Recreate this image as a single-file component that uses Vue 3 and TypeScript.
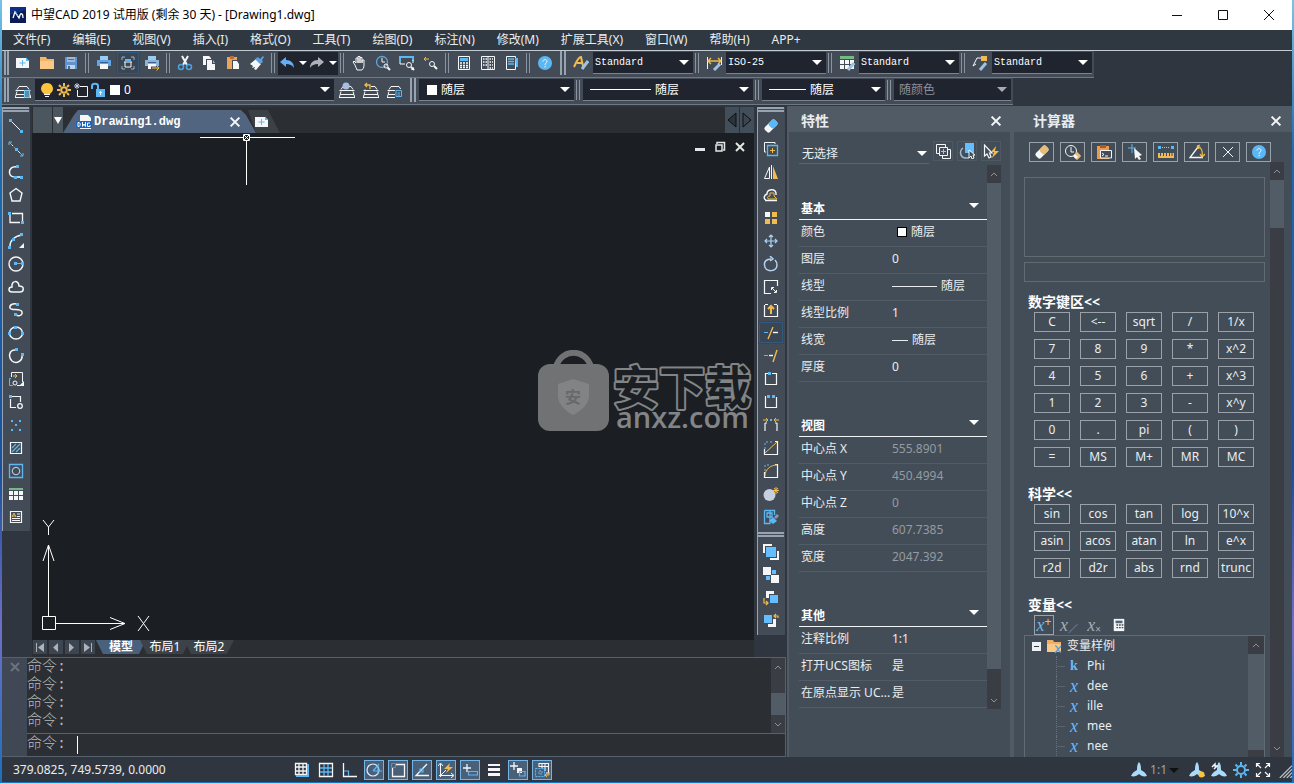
<script setup lang="ts">
import { ref } from 'vue'

const W = '#f4f6f8'
const B = '#5cb8f4'
const Y = '#f0bb50'
const G = '#b9c0c8'

const s = (color: string, d: string, width = 1): string =>
  `<path d="${d}" fill="none" stroke="${color}" stroke-width="${width}"/>`
const f = (color: string, d: string): string => `<path d="${d}" fill="${color}"/>`
const c = (color: string, x: number, y: number, r: number, width = 1): string =>
  `<circle cx="${x}" cy="${y}" r="${r}" fill="none" stroke="${color}" stroke-width="${width}"/>`
const dot = (color: string, x: number, y: number): string =>
  `<rect x="${x}" y="${y}" width="3" height="3" fill="${color}"/>`
const printer = (color: string): string =>
  f('#9bc9f2', 'M4 1H12V5H4z') + f(color, 'M1 5H15V11H1z') + f(W, 'M4 9H12V14H4z') + s('#3a5f8c', 'M4 7.500H12')
const stack = s(W, 'M2 7.500L4 4.500H12L14 7.500M1 8.500H15M1 8V9M15 8V9M2 9.500L1 12.500H15L14 9.500M1 13L0 15.500H16L15 13')
const propeller = f('#a9dcfb', 'M8 0C10 2 10 6 10 8C12 9 15 11 16 14C13 15 10 14 8 12C6 14 3 15 0 14C1 11 4 9 6 8C6 6 6 2 8 0z')
const tableGrid = f(W, 'M1 5H5V9H1zM6 5H10V9H6zM11 5H15V9H11zM1 10H5V14H1zM6 10H10V14H6zM11 10H15V14H11z')
const eraser = (color: string): string =>
  `<g transform="rotate(-45 8 8)"><rect x="1" y="4.500" width="14" height="7" rx="2" fill="${W}"/><rect x="7" y="4.500" width="8" height="7" rx="2" fill="${color}"/></g>`
const question =
  `<circle cx="8" cy="8" r="7" fill="${B}"/>` + s(W, 'M6 6.500C6 4 10 4 10 6.500C10 8 8 8 8 10', 1) + f(W, 'M7.500 11h1.200v1.200h-1.200z')

const icons: Record<string, string> = {
  newFile: f(W, 'M1 3H11L14 6V13H1z') + f(B, 'M11 2.500L14.500 6H11z') + s(B, 'M7.500 5V11M4.500 8H10.500'),
  open: f('#f3b56a', 'M1 2H7L8 4H15V14H1z') + f('#fac887', 'M1 6H15V14H1z'),
  save: f('#5e93cf', 'M2 2H14V14H2z') + f('#9fb9d4', 'M4 2H12V7H4z') + f('#c3d2e2', 'M4 10H12V14H4z') + f('#3f6798', 'M5 11H7V14H5z') + s('#4d6f96', 'M5 4.500H11'),
  print: printer('#5fa6e6'),
  preview: s('#9fb4c8', 'M2 5V2H5M11 2H14V5M14 11V14H11M5 14H2V11') + f(B, 'M5 4H11V6H5z') + s(W, 'M4 7H12M5 7V12H11V7'),
  plot: printer('#8db3d6') + s('#434c56', 'M7 13H16', 3) + s(Y, 'M8 13H15M12.500 10.500L15 13L12.500 15.500', 1),
  cut: s(W, 'M5 1L10 10M11 1L6 10', 2) + c('#4ba2e0', 4, 12, 2.5, 1.5) + c('#4ba2e0', 12, 12, 2.5, 1.5),
  copy: f(W, 'M2 1H8L10 3V10H2z') + f('#434c56', 'M5 4H11L15 8V16H5z') + f(W, 'M6 5H11V9H14V15H6z') + f('#9db5ca', 'M12 5L14 8H12z'),
  paste: f('#eba55a', 'M2 2H12V14H2z') + f('#b96f33', 'M5 1H9V4H5z') + f('#434c56', 'M7 5H12L15 8V15H7z') + f(W, 'M8 6H12L14 9V14H8z'),
  match: f(W, 'M1 9L7 4L12 9L7 15L5 14L6 12L3 13L4 11z') + f('#5f9ee0', 'M6 4L9 2L11 4L14 1L15 2L13 5L14 7L11 9z'),
  undo: f('#65adf5', 'M1 7L7 2V5C12 5 15 8 15 13C13 10 11 9 7 9V12z'),
  redo: f('#aeb2b8', 'M15 7L9 2V5C4 5 1 8 1 13C3 10 5 9 9 9V12z'),
  pan: s(W, 'M4 10L2 7L3 6L5 8V3H7V8V1.500H9V8V2.500H11V8V5H13V10C13 13 12 14 11 15H6C5 13 5 12 4 10', 1),
  zoom: c('#5da7dc', 7, 7, 5.5, 1.3) + s(W, 'M7 3V7H10') + c(W, 11, 11, 2, 1) + s(W, 'M12.500 12.500L15 15', 2),
  zoomWindow: s(B, 'M1 6V2H14V6', 2) + s(W, 'M1 6V9H6M14 5V8') + c(W, 10, 10, 2.5) + s(W, 'M12 12L15 15', 2) + f(W, 'M15 12V15H12z'),
  zoomPrevious: s(Y, 'M1 4H6M3 2L1 4L3 6') + c(W, 9, 9, 2.5) + s(W, 'M11 11L14 14', 2),
  calc: s(W, 'M2.500 1.500H13.500V14.500H2.500z') + f(B, 'M4 3H12V6H4z') + `<path d="M4 8H12M4 10.500H12M4 12.500H12" stroke="${W}" stroke-width="1.400" stroke-dasharray="2 1"/>`,
  palette: s(W, 'M1.500 1.500H14.500V14.500H1.500zM8 1V15') + `<path d="M3 4H7M3 7H7M3 10H7M9.500 4H13M9.500 7H13M9.500 10H13M9.500 13H13" stroke="${W}" stroke-width="1.500" stroke-dasharray="1.500 1"/>`,
  sheet: s(W, 'M2.500 1.500H11.500V14.500H2.500z') + s(B, 'M4 4H10M4 6.500H10M4 9H10', 1.4) + f(B, 'M11 3H14V12H12z'),
  help: question,
  textStyle: s(Y, 'M1 12C3 8 5 2 8 2L10 11M4 8H10', 2) + s('#9fc3e5', 'M15 6L9 14', 3),
  dimStyle: s(W, 'M1.500 2V14M15.500 2V10') + s(Y, 'M2 6H15M5 3L2 6L5 9M12 3L15 6L12 9', 1.4) + s('#9fc3e5', 'M14 9L8 15', 3),
  tableStyle: f('#75b984', 'M1 1H15V4H1z') + tableGrid + s('#9fc3e5', 'M15 8L9 15', 3),
  leaderStyle: s(W, 'M1 11L5 3H10M1 11L4 9') + f(Y, 'M9 1H15V6H9z') + s('#9fc3e5', 'M14 8L8 15', 3),
  layers: stack + f('#79c8fa', 'M9 8H15V16H9z') + s('#355', 'M10 10H14M10 12H14M10 14H14'),
  layerMake: stack + '<circle cx="7" cy="4" r="3.500" fill="#a8bcdf"/>',
  layerPrev: stack + f('#434c56', 'M0 0H8V7H0z') + s(Y, 'M7 7V3H2M4 1L2 3L4 5', 1.3),
  layerState: stack + f('#434c56', 'M8 7H16V16H8z') + s(B, 'M9 8.500H14.500V14.500H9zM10.500 11H13M10.500 13H13'),
  bulb: f('#fcc43c', 'M8 1C12 1 14 4 14 7C14 9 12 11 11 12H5C4 11 2 9 2 7C2 4 4 1 8 1z') + f(W, 'M5 12H11V13H5zM6 14H10V15H6z'),
  sun: c(Y, 8, 8, 2.8, 2) + s(Y, 'M8 1V4M8 12V15M1 8H4M12 8H15M3 3L5 5M11 11L13 13M3 13L5 11M11 5L13 3', 2),
  freeze: s(W, 'M7 4.500H14.500V14.500H4.500V8') + s('#c8d0d8', 'M4 1V7M1 4H7M2 2L6 6M6 2L2 6'),
  lock: s(B, 'M2 7V4C2 1 8 1 8 4V8', 2) + f(B, 'M6 7H15V15H6z') + f(W, 'M10 9H11V13H10zM9 10H12V11H9z'),
  dwg: f(W, 'M4 1H12L15 4V15H4z') + f('#1767c0', 'M0 7H16V14H0z') + s('#fff', 'M2 8.500V12.500C5 13 5 8 2 8.500M6.500 8V12.500L8 10L9.500 12.500V8M14 9H11.500V12.500H14V11'),
  line: s(W, 'M3 3L13 13') + dot(B, 1, 1) + dot(B, 12, 12),
  ray: `<path d="M3 3L13 13" stroke="${W}" stroke-dasharray="3 2"/>` + dot(B, 7, 7) + s(B, 'M1 4V1H4M12 15H15V12M1 1L4 4M15 15L12 12', 1),
  polyline: s(W, 'M9 3C4 2 1 5 1.500 9C2 12 4 13 7 13H14', 1.5) + dot(B, 8, 1) + dot(B, 6, 12) + dot(B, 12, 12),
  polygon: s(W, 'M8 1.500L14 6L12 14H4L2 6z', 1.4),
  rect: s(W, 'M2 4V12.500H12M4 3.500H14.500V11', 1.3) + dot(B, 0, 2) + dot(B, 13, 11),
  arc: s(W, 'M2 13C2 8 6 3 14 2', 1.5) + dot(B, 12, 0) + dot(B, 4, 5) + dot(B, 0, 13) + f(W, 'M16 10V15H11z'),
  circle: c(W, 8, 8, 7, 1.4) + dot(B, 6, 6) + dot(B, 13, 6) + s(B, 'M9 7.500H13'),
  cloud: s(W, 'M4 13C0 13 0 8 4 8C3 1 11 1 11 7C17 7 16 13 12 13z', 1.5),
  spline: s(W, 'M9 2C5 1 1 3 2 6C3 9 13 6 14 10C15 14 9 15 7 12', 1.5) + dot(B, 8, 1) + dot(B, 6, 11),
  ellipse: `<ellipse cx="8" cy="8" rx="6.500" ry="6" fill="none" stroke="${W}" stroke-width="1.500"/>` + dot(B, 6, 1) + dot(B, 0, 7) + dot(B, 13, 7),
  ellipseArc: s(W, 'M7 2C1 2 0 9 4 13C9 17 15 12 14 7', 1.5) + dot(B, 7, 0) + dot(B, 13, 5),
  block: s(W, 'M3.500 6V1.500H14.500V11M9 14.500H12') + s(B, 'M3 7.500H1.500V14.500H5') + s(Y, 'M5 5H9M7 3L9 5L7 7') + c(W, 7, 12, 2) + f(W, 'M16 10V15H11z'),
  makeBlock: s(W, 'M4 2.500H12.500V8M2.500 5V13.500H8', 1.2) + dot(B, 1, 1) + c(W, 12, 12, 2.3, 1.3),
  points: f(B, 'M3 3h2v2h-2zM11 3h2v2h-2zM7 7h2v2h-2zM3 12h2v2h-2zM11 12h2v2h-2z'),
  hatch: s(W, 'M2.500 2.500H13.500V13.500H2.500z', 1.2) + s(B, 'M4 8L8 4M4 12L12 4M8 12L12 8', 1.2),
  region: s(B, 'M1.500 1.500H14.500V14.500H1.500z', 1.3) + c('#a9c6de', 8, 8, 3.7, 1.2),
  table: f('#75b984', 'M1 2H15V4H1z') + tableGrid,
  mtext: s(W, 'M2.500 2.500H13.500V13.500H2.500z', 1.2) + s(Y, 'M4 8L6 4L8 8M4.500 7H7.500') + s(W, 'M9 5H12M9 7.500H12M4 9.500H12M4 11.500H12'),
  erase: eraser(B),
  duplicate: s(W, 'M3 11H1.500V1.500H12V3') + s(B, 'M4.500 4.500H14.500V14.500H4.500z', 1.3) + s(Y, 'M9.500 7V12M7 9.500H12'),
  mirror: s(W, 'M6.500 3V14.500H1.500z') + f(Y, 'M10 2L15 15H10z') + s(W, 'M8.500 1V15'),
  offset: s(W, 'M3 13C0 12 1 8 4 7C4 2 12 1 13 6V8M2 13.500H14', 1.4) + s(Y, 'M5 11.500C4 10 5 9 7 9V6H11V9L14 12H5z'),
  array: f(W, 'M2 2H7V7H2z') + f(Y, 'M9 2H14V7H9zM2 9H7V14H2zM9 9H14V14H9z'),
  move: s('#a9d2f5', 'M8 2V14M2 8H14M6 4L8 2L10 4M6 12L8 14L10 12M4 6L2 8L4 10M12 6L14 8L12 10', 1.2),
  rotate: s('#b5d2f0', 'M8 3C3 3 1 6 1.500 9C2 17 14 16 14 9C14 7 13 5 12 4M7 0L10 3L7 5', 1.5),
  scale: s(W, 'M14.500 7V1.500H1.500V14.500H8', 1.2) + s(W, 'M8.500 11V8.500H11M9 9L13 13M13.500 11V13.500H11', 1),
  stretch: s(W, 'M1.500 3V14.500H14.500V3M2 2.500H5M11 2.500H14', 1.2) + s(Y, 'M8 12V5M5 7L8 4L11 7', 2),
  trim: s(B, 'M1 7.500H5', 1) + s(W, 'M10 7.500H15', 1.4) + s(Y, 'M5 14L10 2', 1.4),
  extend: s(B, 'M1 7.500H5', 1) + s(W, 'M6 7.500H10', 1.4) + s(Y, 'M10 14L14 2', 1.4),
  breakPoint: s(W, 'M6 2.500H2.500V13.500H13.500V2.500H9', 1.2) + dot(B, 5, 1),
  breakLine: s(W, 'M3 2.500H2.500V13.500H13.500V3', 1.2) + dot(B, 4, 1) + dot(B, 9, 1),
  join: s(W, 'M2 6V14M14 6V14M2 6H4M12 6H14', 1.2) + s(Y, 'M0 3H5M3 1L5 3L3 5M16 3H11M13 1L11 3L13 5') + s(B, 'M7 3H9', 2),
  chamfer: s(W, 'M1.500 9V14.500H14.500V1.500H12', 1.2) + s(Y, 'M2 13L14 2') + `<path d="M2 9V2H10" fill="none" stroke="${B}" stroke-dasharray="2 2"/>`,
  fillet: s(W, 'M1.500 9V14.500H14.500V1.500H12', 1.2) + s(Y, 'M2 13C2 7 7 2 14 2') + `<path d="M2 8V2H8" fill="none" stroke="${B}" stroke-dasharray="2 2"/>`,
  explode: '<circle cx="6.500" cy="9" r="6" fill="#c5cfdf"/>' + s(Y, 'M13 1V8M10 4.500H16M11 2L15 7M15 2L11 7'),
  purge: s(B, 'M1.500 1.500H11.500V6M1.500 1.500V14.500H7V1.500M4 4H9V8H4z', 1.3) + f(B, 'M6 12L10 8L14 12L10 15z') + f('#8998a8', 'M11 8L14 5L16 7L13 10z'),
  front: f(W, 'M0 0H9V2H2V9H0zM16 16H7V14H14V7H16z') + f('#63bdff', 'M3 3H13V13H3z'),
  back: f(W, 'M0 0H8V8H0zM8 8H16V16H8z') + f('#63bdff', 'M9 3H13V7H9zM3 9H7V13H3z'),
  above: f(W, 'M3 1H11V4H6V8H3z') + f('#63bdff', 'M7 5H15V13H7z') + s(Y, 'M1 8V13H5M3 11L5 13L3 15', 1.2),
  under: f('#63bdff', 'M1 2H9V10H1z') + f(W, 'M10 6H13V14H5V11H10z') + s(Y, 'M15 5V3H11M13 1L11 3L13 5', 1.2),
  pickAdd: s(W, 'M4 10.500H1.500V1.500H10.500V4M4.500 4.500H12.500V12.500H4.500zM13 6.500H15.500V15.500H7.500V13', 1) + s(Y, 'M8.500 6V11M6 8.500H11'),
  quickSelect: s('#a4b9cd', 'M4 5C0 8 1 14 6 15H10', 1.5) + f('#63bdff', 'M6 0H15V10H6z') + `<path d="M10 7V15L12 13L13 16L15 15L14 12H16z" fill="#434d58" stroke="${W}"/>`,
  filter: `<path d="M1.500 2V13L4 11L6 15L8 14L6.500 10H9z" fill="none" stroke="${W}" stroke-width="1.200"/>` + f(Y, 'M13 3L8 9H11L9 15L16 8H12z'),
  clear: eraser('#e8bd74'),
  history: c(W, 6, 7, 5.5) + s(W, 'M6 3V8H9') + '<rect x="9" y="9" width="6" height="6" rx="1" transform="rotate(45 12 12)" fill="#e8bd74"/>' + f(W, 'M8 12L11 15L13 13L10 10z'),
  pasteValue: f('#eb9a50', 'M1 2H13V15H1z') + f('#a35c2c', 'M4 1H10V4H4z') + f('#434d58', 'M4 6H16V14H4z') + s(W, 'M4.500 6.500H15.500V14H4.500zM6 9L8 10.500L6 12M9 12H12'),
  pick: s(B, 'M5 0V9M1 4H9') + f(W, 'M7 4L15 11L12 12L14 15L12 16L10 13L8 15z'),
  ruler: dot(B, 0, 2) + dot(B, 13, 2) + `<path d="M4 3.500H12" stroke="${Y}" stroke-dasharray="1 1"/>` + f(Y, 'M0 9H16V14H0z') + s('#434d58', 'M2.500 9V12M5.500 9V12M8.500 9V12M11.500 9V12M14 9V12'),
  angle: s(W, 'M9 3L1 13.500H14', 1.3) + s(Y, 'M8 2C12 3 14 7 13 12M8 2L11 1M8 2L10 5M11 10L13 13L16 10', 1.3),
  cross: s(W, 'M3 3L13 13M13 3L3 13'),
  close: s(W, 'M3 3L13 13M13 3L3 13', 2.4),
  calculator: f(W, 'M2 1H14V15H2z') + f('#566370', 'M4 3H12V6H4z') + s('#434d58', 'M5 8H7M8 8H10M11 8H13M5 11H7M8 11H10M11 11H13', 1.6),
  grid: s(W, 'M1.500 1.500H12.500V12.500H1.500zM5 1V13M9 1V13M1 5H13M1 9H13', 1.3) + s(B, 'M14 2V14H2', 2),
  snap: s(W, 'M1.500 1.500H14.500V14.500H1.500z', 1.3) + s(B, 'M6 2V14M10 2V14M2 6H14M2 10H14', 1.3),
  ortho: s(W, 'M1.500 1V14.500H15', 1.3) + s(B, 'M2 9H6.500V14', 1.2),
  polar: c('#e0eefc', 7, 8, 6, 1.2) + s(B, 'M7 9H16M7 9L13 2M12 5V12', 1.2),
  osnap: s(W, 'M6 2.500H14.500V14.500H2.500V6', 1.3) + s('#e15b69', 'M1.500 1.500H5.500V5.500H1.500z'),
  track: s(W, 'M13 2L2 13.500H15', 1.3) + s(B, 'M6 7H9V10H6z', 1.2),
  ucs: s(W, 'M2.500 2V15M1 13.500H15M0 4L2.500 1L5 4M13 11L16 13.500L13 16M3 13L8 8') + f(Y, 'M12 1L6 7H10L8 11L15 5H11z'),
  dynInput: s(W, 'M5 2V10M1 6H9', 1.3) + s(B, 'M6.500 9.500H15.500V13H6.500z', 1.2),
  lineWeight: f(W, 'M2 2H14V4H2zM2 6H14V9H2zM2 11H14V14H2z'),
  cycle: s(W, 'M4 0V8M0 4H8', 1.3) + f(W, 'M7 6H12V11H7z') + s(B, 'M9.500 9.500H15V14H9.500z', 1.2),
  annotation: s(W, 'M5 5V1.500H14.500V11H12M8 2V6M11 2V9M5 4.500H14', 1.1) + `<path d="M1.500 6.500H10.500V14.500H1.500zM5 9H8V12H5z" fill="none" stroke="${B}" stroke-dasharray="2 1"/>` + s(Y, 'M15 10V13H11M13 11L11 13L13 15'),
  scaleIcon: propeller,
  scaleBulb: propeller + '<circle cx="12.500" cy="12.500" r="3" fill="#fcc43c"/>',
  scaleAuto: propeller + s(W, 'M1 5L4 2V4H7M3 7L6 4', 1.5),
  gear: c(B, 8, 8, 4, 2) + s(B, 'M8 0V3M8 13V16M0 8H3M13 8H16M2.500 2.500L4.500 4.500M11.500 11.500L13.500 13.500M2.500 13.500L4.500 11.500M11.500 4.500L13.500 2.500', 2),
  fullscreen: s(W, 'M1.500 5V1.500H5M11 1.500H14.500V5M14.500 11V14.500H11M5 14.500H1.500V11M2 2L6 6M14 2L10 6M14 14L10 10M2 14L6 10', 1.2),
  resize: s(G, 'M2 16L16 2M6 16L16 6M10 16L16 10M14 16L16 14', 1.4),
  appLogo: f('#0f2f85', 'M0 0H16V16H0z') + f('#0a1c56', 'M0 8L16 3V16H0z') + s('#fff', 'M3 11L5 5L9 11L10 8C11 6 13 6 13 11', 1.3) + s('#4cc3ff', 'M5 4L8 9'),
  folder: f('#eeb068', 'M1 2H7L8 4H15V14H1z') + f('#fac887', 'M1 6H15V14H1z') + s('#5b9bd0', 'M9 8C12 7 12 15 15 14M15 8L9 15', 1.3),
}

const menus = ['文件(F)', '编辑(E)', '视图(V)', '插入(I)', '格式(O)', '工具(T)', '绘图(D)', '标注(N)', '修改(M)', '扩展工具(X)', '窗口(W)', '帮助(H)', 'APP+']
const fileGroups = [
  ['newFile', 'open', 'save'],
  ['print', 'preview', 'plot'],
  ['cut', 'copy', 'paste', 'match'],
]
const viewGroups = [
  ['pan', 'zoom', 'zoomWindow', 'zoomPrevious'],
  ['calc', 'palette', 'sheet'],
]
const styleCombos = [
  { icon: 'textStyle', value: 'Standard' },
  { icon: 'dimStyle', value: 'ISO-25' },
  { icon: 'tableStyle', value: 'Standard' },
  { icon: 'leaderStyle', value: 'Standard' },
]
const layerFlags = ['bulb', 'sun', 'freeze', 'lock']
const layerTools = ['layerMake', 'layerPrev', 'layerState']
const drawTools = ['line', 'ray', 'polyline', 'polygon', 'rect', 'arc', 'circle', 'cloud', 'spline', 'ellipse', 'ellipseArc', 'block', 'makeBlock', 'points', 'hatch', 'region', 'table', 'mtext']
const modifyTools = ['erase', 'duplicate', 'mirror', 'offset', 'array', 'move', 'rotate', 'scale', 'stretch', 'trim', 'extend', 'breakPoint', 'breakLine', 'join', 'chamfer', 'fillet', 'explode', 'purge']
const orderTools = ['front', 'back', 'above', 'under']

interface PropertyRow {
  label: string
  value: string
  mark?: 'swatch' | 'long' | 'short'
}
interface PropertySection {
  title: string
  muted?: boolean
  rows: PropertyRow[]
}
const sections: PropertySection[] = [
  {
    title: '基本',
    rows: [
      { label: '颜色', value: '随层', mark: 'swatch' },
      { label: '图层', value: '0' },
      { label: '线型', value: '随层', mark: 'long' },
      { label: '线型比例', value: '1' },
      { label: '线宽', value: '随层', mark: 'short' },
      { label: '厚度', value: '0' },
    ],
  },
  {
    title: '视图',
    muted: true,
    rows: [
      { label: '中心点 X', value: '555.8901' },
      { label: '中心点 Y', value: '450.4994' },
      { label: '中心点 Z', value: '0' },
      { label: '高度', value: '607.7385' },
      { label: '宽度', value: '2047.392' },
    ],
  },
  {
    title: '其他',
    rows: [
      { label: '注释比例', value: '1:1' },
      { label: '打开UCS图标', value: '是' },
      { label: '在原点显示 UC...', value: '是' },
    ],
  },
]
const pickTools = ['pickAdd', 'quickSelect', 'filter']
const calcTools = ['clear', 'history', 'pasteValue', 'pick', 'ruler', 'angle', 'cross', 'help']
const numberKeys = ['C', '<--', 'sqrt', '/', '1/x', '7', '8', '9', '*', 'x^2', '4', '5', '6', '+', 'x^3', '1', '2', '3', '-', 'x^y', '0', '.', 'pi', '(', ')', '=', 'MS', 'M+', 'MR', 'MC']
const scienceKeys = ['sin', 'cos', 'tan', 'log', '10^x', 'asin', 'acos', 'atan', 'ln', 'e^x', 'r2d', 'd2r', 'abs', 'rnd', 'trunc']
const variables = [
  { kind: 'k', name: 'Phi' },
  { kind: 'x', name: 'dee' },
  { kind: 'x', name: 'ille' },
  { kind: 'x', name: 'mee' },
  { kind: 'x', name: 'nee' },
]
const statusTools = [
  { icon: 'grid', on: false },
  { icon: 'snap', on: false },
  { icon: 'ortho', on: false },
  { icon: 'polar', on: true },
  { icon: 'osnap', on: true },
  { icon: 'track', on: true },
  { icon: 'ucs', on: true },
  { icon: 'dynInput', on: true },
  { icon: 'lineWeight', on: false },
  { icon: 'cycle', on: true },
  { icon: 'annotation', on: true },
]
const layouts = ['模型', '布局1', '布局2']
const activeLayout = ref('模型')
const history = ['命令:', '命令:', '命令:', '命令:']
const display = ref('')
const expression = ref('')
const command = ref('')
</script>

<template>
  <div class="window">
    <header class="titlebar">
      <svg class="ic" viewBox="0 0 16 16" v-html="icons.appLogo" />
      <h1>中望CAD 2019 试用版 (剩余 30 天) - [Drawing1.dwg]</h1>
      <button aria-label="最小化"><svg viewBox="0 0 12 12"><path d="M1 6.500H11" stroke="#111" /></svg></button>
      <button aria-label="最大化"><svg viewBox="0 0 12 12"><path d="M1.500 1.500H10.500V10.500H1.500z" fill="none" stroke="#111" /></svg></button>
      <button aria-label="关闭"><svg viewBox="0 0 12 12"><path d="M1 1L11 11M11 1L1 11" stroke="#111" /></svg></button>
    </header>

    <nav class="menubar">
      <button v-for="m in menus" :key="m">{{ m }}</button>
    </nav>

    <div class="toolrow">
      <div class="toolbar">
        <i class="grip" />
        <template v-for="(g, gi) in fileGroups" :key="gi">
          <button v-for="n in g" :key="n" class="tool" :class="{ hot: n === 'preview' }" :aria-label="n">
            <svg class="ic" viewBox="0 0 16 16" v-html="icons[n]" />
          </button>
          <i class="sep" />
        </template>
        <div class="undobox">
          <button aria-label="撤销"><svg class="ic" viewBox="0 0 16 16" v-html="icons.undo" /><i class="tri" /></button>
          <button aria-label="重做"><svg class="ic" viewBox="0 0 16 16" v-html="icons.redo" /><i class="tri" /></button>
        </div>
        <i class="sep" />
        <template v-for="(g, gi) in viewGroups" :key="gi">
          <button v-for="n in g" :key="n" class="tool" :aria-label="n">
            <svg class="ic" viewBox="0 0 16 16" v-html="icons[n]" />
          </button>
          <i class="sep" />
        </template>
        <button class="tool" aria-label="帮助"><svg class="ic" viewBox="0 0 16 16" v-html="icons.help" /></button>
        <i class="grip wide" />
        <template v-for="(p, pi) in styleCombos" :key="pi">
          <i v-if="pi > 0" class="sep" />
          <button class="tool" :aria-label="p.icon"><svg class="ic" viewBox="0 0 16 16" v-html="icons[p.icon]" /></button>
          <div class="combo style">
            <select :aria-label="p.icon"><option>{{ p.value }}</option></select>
            <i class="tri" />
          </div>
        </template>
      </div>
    </div>

    <div class="toolrow">
      <div class="toolbar">
        <i class="grip" />
        <button class="tool" aria-label="图层管理器"><svg class="ic" viewBox="0 0 16 16" v-html="icons.layers" /></button>
        <div class="combo layer">
          <svg v-for="n in layerFlags" :key="n" class="ic" viewBox="0 0 16 16" v-html="icons[n]" />
          <i class="swatch" />
          <select aria-label="图层"><option>0</option></select>
          <i class="tri" />
        </div>
        <button v-for="n in layerTools" :key="n" class="tool" :aria-label="n">
          <svg class="ic" viewBox="0 0 16 16" v-html="icons[n]" />
        </button>
        <i class="grip wide" />
        <div class="combo color">
          <i class="swatch" />
          <select aria-label="颜色"><option>随层</option></select>
          <i class="tri" />
        </div>
        <i class="sep" />
        <div class="combo ltype">
          <i class="stroke long" />
          <select aria-label="线型"><option>随层</option></select>
          <i class="tri" />
        </div>
        <i class="sep" />
        <div class="combo lweight">
          <i class="stroke" />
          <select aria-label="线宽"><option>随层</option></select>
          <i class="tri" />
        </div>
        <i class="sep" />
        <div class="combo plot">
          <select aria-label="打印样式" disabled><option>随颜色</option></select>
          <i class="tri dim" />
        </div>
      </div>
    </div>

    <main class="body">
      <div class="work">
        <div class="stage">
          <aside class="dock">
            <div class="rail">
              <i class="hgrip" />
              <button v-for="n in drawTools" :key="n" :aria-label="n"><svg class="ic" viewBox="0 0 16 16" v-html="icons[n]" /></button>
            </div>
          </aside>

          <section class="document">
            <div class="doctabs">
              <span class="tabblank" />
              <button class="tablist" aria-label="文档列表"><i class="tri" /></button>
              <div class="doctab">
                <svg class="ic" viewBox="0 0 16 16" v-html="icons.dwg" />
                <span>Drawing1.dwg</span>
                <button aria-label="关闭图形"><svg viewBox="0 0 16 16" v-html="icons.close" /></button>
              </div>
              <button class="newtab" aria-label="新建图形"><svg class="ic" viewBox="0 0 16 16" v-html="icons.newFile" /></button>
              <span class="fill" />
              <button class="scroll" aria-label="向左"><svg viewBox="0 0 12 16"><path d="M10 1V15L2 8z" fill="#2d333b" stroke="#0c0e10" /></svg></button>
              <button class="scroll" aria-label="向右"><svg viewBox="0 0 12 16"><path d="M2 1V15L10 8z" fill="#3d444e" stroke="#0c0e10" /></svg></button>
            </div>

            <div class="canvas">
              <svg class="cursor" viewBox="0 0 96 56">
                <path d="M0 4.500H43M50 4.500H95M46.500 8V52M43.500 1.500H49.500V7.500H43.500zM44 2L49 7M49 2L44 7" fill="none" stroke="#fff" />
              </svg>
              <div class="mdi">
                <button aria-label="最小化图形"><svg viewBox="0 0 12 12"><path d="M1 8.500H11" stroke="#e6e6e6" stroke-width="3" /></svg></button>
                <button aria-label="还原图形"><svg viewBox="0 0 12 12"><path d="M3 3V1.500H10.500V9H9M2 4H8V10H2z" fill="none" stroke="#e6e6e6" stroke-width="1.500" /></svg></button>
                <button aria-label="关闭图形窗口"><svg viewBox="0 0 12 12"><path d="M2 2L10 10M10 2L2 10" stroke="#e6e6e6" stroke-width="2" /></svg></button>
              </div>
              <svg class="brand" viewBox="0 0 216 84">
                <path d="M18 17C23 -2 48 -2 53 17" fill="none" stroke="#707274" stroke-width="6" />
                <rect y="14" width="71" height="67" rx="12" fill="#707274" />
                <path d="M35 29L51 34V47C50 56 41 62 35 65C29 62 21 56 20 47V34z" fill="#818385" />
                <text x="35" y="53" class="seal">安</text>
                <text x="75" y="54" class="outline">安下载</text>
                <text x="78" y="78" class="domain">anxz.com</text>
              </svg>
              <svg class="ucs" viewBox="0 0 112 116">
                <path d="M1.500 99.500H14.500V112.500H1.500zM7.500 99V28M2 44L7.500 28L13 44M15 106.500H84M69 100.500L84 106.500L69 112.500M2 3L7.500 10L13 3M7.500 10V18M97 99L108 114M108 99L97 114" fill="none" stroke="#fff" />
              </svg>
            </div>

            <div class="layouts">
              <button class="step" aria-label="第一个"><svg viewBox="0 0 12 12"><path d="M2.500 2V11" stroke="#aab2bc" /><path d="M10 2V11L4 6.500z" fill="#aab2bc" /></svg></button>
              <button class="step" aria-label="上一个"><svg viewBox="0 0 12 12"><path d="M8 2V11L3 6.500z" fill="#aab2bc" /></svg></button>
              <button class="step" aria-label="下一个"><svg viewBox="0 0 12 12"><path d="M3 2V11L8 6.500z" fill="#aab2bc" /></svg></button>
              <button class="step" aria-label="最后一个"><svg viewBox="0 0 12 12"><path d="M9.500 2V11" stroke="#aab2bc" /><path d="M2 2V11L8 6.500z" fill="#aab2bc" /></svg></button>
              <button v-for="l in layouts" :key="l" class="layout" :class="{ active: l === activeLayout }" @click="activeLayout = l">{{ l }}</button>
            </div>
          </section>

          <aside class="dock right">
            <div class="rail">
              <i class="hgrip" />
              <button v-for="n in modifyTools" :key="n" :class="{ hot: n === 'trim' }" :aria-label="n"><svg class="ic" viewBox="0 0 16 16" v-html="icons[n]" /></button>
              <i class="hgrip second" />
              <button v-for="n in orderTools" :key="n" :aria-label="n"><svg class="ic" viewBox="0 0 16 16" v-html="icons[n]" /></button>
            </div>
          </aside>
        </div>

        <section class="console">
          <button class="hide" aria-label="关闭命令行"><svg viewBox="0 0 16 16"><path d="M4 4L12 12M12 4L4 12" stroke="#6a747e" stroke-width="2" /></svg></button>
          <div class="lines">
            <div class="log">
              <div class="past"><p v-for="(h, i) in history" :key="i">{{ h }}</p></div>
              <div class="bar">
                <button aria-label="向上滚动"><svg viewBox="0 0 10 10"><path d="M2 7L5 4L8 7" /></svg></button>
                <span class="room" /><span class="thumb" />
                <button aria-label="向下滚动"><svg viewBox="0 0 10 10"><path d="M2 4L5 7L8 4" /></svg></button>
              </div>
            </div>
            <label class="prompt">命令: <i class="caret" /><input v-model="command" type="text" /></label>
          </div>
        </section>
      </div>

      <section class="panel props">
        <header><h2>特性</h2><button aria-label="关闭特性"><svg viewBox="0 0 16 16" v-html="icons.close" /></button></header>
        <div class="picker">
          <div class="choice"><select aria-label="选择"><option>无选择</option></select><i class="tri" /></div>
          <button v-for="n in pickTools" :key="n" :aria-label="n"><svg class="ic" viewBox="0 0 16 16" v-html="icons[n]" /></button>
        </div>
        <div class="sheet">
          <div class="sections">
            <template v-for="sec in sections" :key="sec.title">
              <h3>{{ sec.title }}<i class="tri" /></h3>
              <dl :class="{ muted: sec.muted }">
                <div v-for="row in sec.rows" :key="row.label">
                  <dt>{{ row.label }}</dt>
                  <dd><i v-if="row.mark" class="mark" :class="row.mark" />{{ row.value }}</dd>
                </div>
              </dl>
            </template>
          </div>
          <div class="bar">
            <button aria-label="向上"><svg viewBox="0 0 10 10"><path d="M2 7L5 4L8 7" /></svg></button>
            <span class="thumb" /><span class="room" />
            <button aria-label="向下"><svg viewBox="0 0 10 10"><path d="M2 4L5 7L8 4" /></svg></button>
          </div>
        </div>
      </section>

      <section class="panel calc">
        <header><h2>计算器</h2><button aria-label="关闭计算器"><svg viewBox="0 0 16 16" v-html="icons.close" /></button></header>
        <div class="calctools">
          <button v-for="n in calcTools" :key="n" :aria-label="n"><svg class="ic" viewBox="0 0 16 16" v-html="icons[n]" /></button>
        </div>
        <div class="calcbody">
          <div class="pads">
            <textarea v-model="display" aria-label="历史记录" readonly />
            <input v-model="expression" type="text" aria-label="表达式" />
            <h3>数字键区&lt;&lt;</h3>
            <div class="keys"><button v-for="k in numberKeys" :key="k">{{ k }}</button></div>
            <h3>科学&lt;&lt;</h3>
            <div class="keys"><button v-for="k in scienceKeys" :key="k">{{ k }}</button></div>
            <h3>变量&lt;&lt;</h3>
            <div class="vartools">
              <button class="boxed" aria-label="新建变量"><span class="var">x</span><sup>+</sup></button>
              <button class="off" aria-label="编辑变量"><span class="var">x</span><sub>∕</sub></button>
              <button class="off" aria-label="删除变量"><span class="var">x</span><sub>×</sub></button>
              <button aria-label="计算器"><svg viewBox="0 0 16 16" v-html="icons.calculator" /></button>
            </div>
            <div class="tree">
              <ul>
                <li class="root"><i class="minus" /><svg class="ic" viewBox="0 0 16 16" v-html="icons.folder" />变量样例</li>
                <li v-for="v in variables" :key="v.name"><span class="var" :class="v.kind">{{ v.kind }}</span>{{ v.name }}</li>
              </ul>
              <div class="bar">
                <button aria-label="列表向上"><svg viewBox="0 0 10 10"><path d="M2 7L5 4L8 7" /></svg></button>
                <span class="thumb" />
              </div>
            </div>
          </div>
          <div class="bar">
            <button aria-label="面板向上"><svg viewBox="0 0 10 10"><path d="M2 7L5 4L8 7" /></svg></button>
            <span class="thumb" /><span class="room" />
            <button aria-label="面板向下"><svg viewBox="0 0 10 10"><path d="M2 4L5 7L8 4" /></svg></button>
          </div>
        </div>
      </section>
    </main>

    <footer class="status">
      <output>379.0825, 749.5739, 0.0000</output>
      <div class="toggles">
        <button v-for="t in statusTools" :key="t.icon" :class="{ on: t.on }" :aria-label="t.icon" :aria-pressed="t.on">
          <svg class="ic" viewBox="0 0 16 16" v-html="icons[t.icon]" />
        </button>
      </div>
      <div class="rightside">
        <button aria-label="注释比例"><svg class="ic" viewBox="0 0 16 16" v-html="icons.scaleIcon" /></button>
        <button class="ratio">1:1<i class="tri black" /></button>
        <button aria-label="注释可见性"><svg class="ic" viewBox="0 0 16 16" v-html="icons.scaleBulb" /></button>
        <button aria-label="自动缩放"><svg class="ic" viewBox="0 0 16 16" v-html="icons.scaleAuto" /></button>
        <button aria-label="设置"><svg class="ic" viewBox="0 0 16 16" v-html="icons.gear" /></button>
        <button aria-label="全屏"><svg class="ic" viewBox="0 0 16 16" v-html="icons.fullscreen" /></button>
        <svg class="corner" viewBox="0 0 16 16" v-html="icons.resize" />
      </div>
    </footer>
  </div>
</template>

<style>
body {
  margin: 0;
  background: #30363f;
}
</style>

<style scoped>
* {
  box-sizing: border-box;
}
.window {
  display: flex;
  flex-direction: column;
  height: 100vh;
  overflow: hidden;
  border: solid #1d67b0;
  border-width: 0 2px 1px;
  border-image: linear-gradient(#74c6e8, #1c6bb0 20%, #1a4f9c 60%, #6f6fc8 80%, #1c70bd) 1;
  background: #30363f;
  color: #e9edf0;
  font-family: 'Noto Sans', 'Noto Sans CJK SC', sans-serif;
  font-size: 12px;
  line-height: 16px;
}
button,
select,
input,
textarea {
  margin: 0;
  padding: 0;
  border: 0;
  border-radius: 0;
  outline: 0;
  background: none;
  color: inherit;
  font: inherit;
}
button {
  display: flex;
  align-items: center;
  justify-content: center;
  white-space: nowrap;
}
select {
  appearance: none;
}
h1,
h2,
h3,
p,
ul,
dl,
dd {
  margin: 0;
  padding: 0;
}
.ic {
  display: block;
  flex: none;
  width: 16px;
  height: 16px;
}
.tri {
  flex: none;
  border: solid transparent;
  border-width: 5px 5px 0;
  border-top-color: #fff;
}
.tri.dim {
  border-top-color: #a5abb2;
}
.tri.black {
  border-top-color: #0e1012;
}

.titlebar {
  display: flex;
  flex: none;
  align-items: center;
  height: 30px;
  padding-left: 8px;
  background: #fff;
  color: #000;
}
.titlebar h1 {
  flex: 1;
  margin-left: 5px;
  font-size: 12px;
  font-weight: 400;
}
.titlebar button {
  width: 46px;
  height: 30px;
}
.titlebar button svg {
  width: 12px;
  height: 12px;
}
.menubar {
  display: flex;
  flex: none;
  height: 21px;
  border-bottom: 1px solid #c3cbd2;
  background: #2f3841;
}
.menubar button {
  padding: 0 11px;
}

.toolrow {
  display: flex;
  flex: none;
  height: 27px;
}
.toolbar {
  display: flex;
  align-items: center;
  height: 27px;
  padding: 0 2px 2px 0;
  border-bottom: 1px solid #6f7984;
  background: #434c56;
}
.toolrow + .toolrow {
  height: 28px;
}
.grip {
  flex: none;
  width: 5px;
  height: 24px;
  margin: 0 2px;
  border: solid #97a3b0;
  border-width: 0 2px;
}
.grip.wide {
  width: 6px;
  margin: 0 3px;
}
.sep {
  flex: none;
  width: 4px;
  height: 20px;
  margin: 0 3px 0 2px;
  border: solid #8a94a0;
  border-width: 0 1px;
}
.tool {
  flex: none;
  width: 24px;
  height: 24px;
}
.hot {
  outline: 1px solid #35577c;
  outline-offset: -2px;
  background: #3a4653;
}
.undobox {
  display: flex;
  width: 60px;
  height: 23px;
  background: #20242f;
}
.undobox button {
  flex: 1;
  gap: 4px;
}
.undobox .tri {
  border-width: 4px 4px 0;
}
.combo {
  display: flex;
  flex: none;
  align-items: center;
  height: 22px;
  padding: 0 4px 0 2px;
  border-bottom: 1px solid #7b848e;
  background: #20242f;
}
.combo select {
  flex: 1;
  min-width: 0;
  color: #fff;
}
.combo.style {
  width: 100px;
}
.combo.style select {
  font-family: 'Liberation Mono', monospace;
  font-size: 10px;
}
.combo.layer {
  gap: 1px;
  width: 299px;
  margin-right: 1px;
  padding-left: 4px;
}
.combo.color {
  gap: 4px;
  width: 155px;
  padding-left: 8px;
}
.combo.ltype {
  gap: 4px;
  width: 170px;
  padding-left: 7px;
}
.combo.lweight {
  gap: 4px;
  width: 123px;
  padding-left: 7px;
}
.combo.plot {
  width: 117px;
  padding-left: 5px;
}
.combo.plot select {
  color: #8a919b;
  opacity: 1;
}
.swatch {
  flex: none;
  width: 10px;
  height: 10px;
  background: #fff;
}
.combo.layer .swatch {
  margin: 0 3px;
}
.stroke {
  flex: none;
  width: 37px;
  height: 1px;
  background: #fff;
}
.stroke.long {
  width: 61px;
}

.body {
  display: flex;
  flex: 1;
  min-height: 0;
}
.work {
  display: flex;
  flex: 1;
  flex-direction: column;
  min-width: 0;
}
.stage {
  display: flex;
  flex: 1;
  min-height: 0;
  padding-top: 1px;
}
.dock {
  flex: none;
  width: 30px;
}
.dock.right {
  width: 33px;
  padding-left: 3px;
}
.rail {
  display: flex;
  flex-direction: column;
  width: 28px;
  padding: 0 1px 3px 0;
  border-left: 1px solid #97a3b0;
  background: #434c56;
}
.rail button {
  flex: none;
  height: 23px;
}
.hgrip {
  flex: none;
  height: 5px;
  margin-bottom: 2px;
  border: solid #97a3b0;
  border-width: 2px 0;
}
.hgrip.second {
  margin: 4px 0 3px;
}
.document {
  display: flex;
  flex: 1;
  flex-direction: column;
  min-width: 0;
}
.doctabs {
  display: flex;
  flex: none;
  align-items: flex-end;
  height: 26px;
  padding-left: 1px;
  background: #2b2e32;
}
.tabblank,
.tablist {
  width: 19px;
  height: 26px;
  background: #4b565f;
}
.tablist {
  width: 10px;
  margin-left: 1px;
}
.tablist .tri {
  border-width: 7px 4px 0;
}
.doctab {
  display: flex;
  align-items: center;
  width: 193px;
  height: 23px;
  padding: 0 14px 0 13px;
  clip-path: polygon(0 100%, 11px 5px, 15px 0, 178px 0, 183px 5px, 193px 100%);
  background: #526580;
  color: #fff;
  font-family: 'Liberation Mono', monospace;
  font-weight: 700;
}
.doctab span {
  flex: 1;
  margin-left: 2px;
}
.doctab button,
.doctab button svg {
  width: 14px;
  height: 14px;
}
.newtab {
  width: 32px;
  height: 23px;
  margin-left: -8px;
  padding-right: 4px;
  clip-path: polygon(0 0, 20px 0, 32px 100%, 8px 100%);
  background: #3c4146;
}
.fill {
  flex: 1;
}
.scroll {
  width: 14px;
  height: 26px;
  margin-left: 1px;
  background: #434e5b;
}
.scroll svg {
  width: 12px;
  height: 16px;
}
.canvas {
  position: relative;
  flex: 1;
  min-height: 0;
  background: #1b1e22;
}
.cursor {
  position: absolute;
  top: 0;
  left: 168px;
  width: 96px;
  height: 56px;
}
.mdi {
  position: absolute;
  top: 8px;
  right: 8px;
  display: flex;
  gap: 8px;
}
.mdi svg {
  display: block;
  width: 12px;
  height: 12px;
}
.brand {
  position: absolute;
  top: 217px;
  right: 0;
  width: 216px;
  height: 84px;
}
.seal {
  fill: #67696b;
  font-size: 16px;
  font-weight: 700;
  text-anchor: middle;
}
.outline {
  fill: #1b1e22;
  stroke: #828587;
  stroke-width: 4px;
  paint-order: stroke;
  stroke-linejoin: round;
  font-size: 46px;
  font-weight: 700;
}
.domain {
  fill: #828587;
  font-family: 'Open Sans', sans-serif;
  font-size: 29px;
  font-weight: 600;
}
.ucs {
  position: absolute;
  bottom: 7px;
  left: 9px;
  width: 112px;
  height: 116px;
}
.layouts {
  display: flex;
  flex: none;
  height: 17px;
  padding-bottom: 3px;
  background: #2b2e32;
}
.step {
  width: 14px;
  height: 14px;
  margin: 0 1px;
  background: #3d4550;
}
.step svg {
  width: 12px;
  height: 12px;
}
.layout {
  width: 50px;
  height: 14px;
  margin-right: -6px;
  clip-path: polygon(0 0, 100% 0, 43px 100%, 7px 100%);
  background: #3c4248;
  color: #fff;
}
.layout.active {
  background: #4a617d;
  font-weight: 700;
}

.console {
  display: flex;
  flex: none;
  margin-right: 1px;
  border: solid #56616b;
  border-width: 1px 1px 1px 0;
  background: #2b2e32;
}
.hide {
  flex: none;
  align-items: flex-start;
  width: 25px;
  padding-top: 1px;
  background: #3f4854;
}
.hide svg {
  width: 16px;
  height: 16px;
}
.lines {
  flex: 1;
  color: #b4b9be;
  font-family: 'Liberation Mono', 'Noto Sans CJK SC', monospace;
  font-size: 15px;
  font-weight: 300;
}
.log {
  display: flex;
  height: 76px;
  border-bottom: 1px solid #56616b;
}
.past {
  flex: 1;
  padding-top: 1px;
}
.past p {
  height: 18px;
  line-height: 18px;
}
.prompt {
  display: flex;
  align-items: center;
  height: 22px;
}
.prompt input {
  flex: 1;
}
.caret {
  width: 1px;
  height: 18px;
  margin-left: 11px;
  background: #fff;
}
.bar {
  display: flex;
  flex: none;
  flex-direction: column;
  width: 14px;
  background: #3a3e44;
}
.bar button {
  height: 18px;
}
.bar svg {
  width: 10px;
  height: 10px;
  fill: none;
  stroke: #8b9299;
}
.bar .room {
  flex: 1;
}
.bar .thumb {
  background: #515c66;
}
.console .thumb {
  height: 22px;
}

.panel {
  display: flex;
  flex: none;
  flex-direction: column;
  border-left: 2px solid #505b66;
  background: #434d58;
}
.panel header {
  display: flex;
  flex: none;
  align-items: center;
  justify-content: space-between;
  height: 26px;
  background: #505b66;
}
.panel h2 {
  font-size: 14px;
  line-height: 20px;
}
.panel header button,
.panel header svg {
  width: 14px;
  height: 14px;
}
.props {
  width: 223px;
}
.props header {
  padding: 3px 7px 0 12px;
}
.picker {
  display: flex;
  flex: none;
  gap: 4px;
  height: 33px;
  padding: 9px 9px 0 10px;
}
.picker button {
  width: 20px;
  height: 20px;
  border: 1px solid #4d5863;
}
.choice {
  display: flex;
  flex: 1;
  align-items: center;
  margin-bottom: 1px;
  padding: 3px 2px 0 3px;
  border-bottom: 1px solid #5a646e;
}
.choice select {
  flex: 1;
}
.sheet {
  display: flex;
  flex: none;
  padding: 0 9px 0 10px;
}
.sections {
  flex: 1;
  min-width: 0;
  padding-bottom: 1px;
}
.sections h3 {
  display: flex;
  align-items: flex-end;
  justify-content: space-between;
  height: 55px;
  padding: 0 8px 2px 2px;
  border-bottom: 1px solid #f2f4f6;
  color: #fff;
  font-size: 12px;
}
.sections h3 .tri {
  margin-bottom: 9px;
}
.sections dl > div {
  display: flex;
  height: 27px;
  padding: 4px 0 0 2px;
  border-bottom: 1px solid #525c66;
}
.sections dt {
  flex: none;
  width: 91px;
  white-space: nowrap;
}
.sections dd {
  display: flex;
  align-items: center;
  height: 16px;
}
.muted dd {
  color: #949ba2;
}
.mark {
  width: 45px;
  height: 1px;
  margin-right: 4px;
  background: #e9edf0;
}
.mark.short {
  width: 16px;
}
.mark.swatch {
  width: 10px;
  height: 10px;
  margin: 0 4px 0 5px;
  border: 1px solid #000;
  background: #fff;
}
.props .thumb {
  flex: 1;
}
.props .bar .room {
  flex: none;
  height: 22px;
}

.calc {
  width: 282px;
  border-left-width: 4px;
}
.calc header {
  padding: 3px 9px 0 19px;
}
.calctools {
  display: flex;
  flex: none;
  gap: 6px;
  height: 30px;
  padding: 10px 0 0 15px;
}
.calctools button {
  width: 25px;
  height: 20px;
  border: 1px solid #9aa1a8;
}
.calcbody {
  display: flex;
  flex: 1;
  min-height: 0;
  overflow: hidden;
  padding-right: 8px;
}
.calcbody > .bar .thumb {
  height: 48px;
}
.pads {
  display: flex;
  flex: 1;
  flex-direction: column;
  min-width: 0;
  padding: 15px 5px 0 10px;
}
.pads textarea,
.pads > input {
  flex: none;
  height: 80px;
  border: 1px solid #626a72;
  resize: none;
}
.pads > input {
  height: 20px;
  margin-top: 5px;
}
.pads h3 {
  flex: none;
  height: 20px;
  margin: 10px 0 0 4px;
  color: #fff;
  font-size: 14px;
  line-height: 20px;
}
.keys {
  display: grid;
  flex: none;
  grid-template-columns: repeat(5, 36px);
  gap: 7px 10px;
  padding-left: 10px;
}
.keys + h3 {
  margin-top: 17px;
}
.keys button {
  height: 20px;
  border: 1px solid #9aa1a8;
}
.vartools {
  display: flex;
  flex: none;
  gap: 5px;
  padding-left: 10px;
}
.vartools button {
  width: 20px;
  height: 20px;
}
.vartools svg {
  width: 14px;
  height: 14px;
}
.vartools .boxed {
  border: 1px solid #9aa1a8;
}
.var {
  width: 12px;
  color: #6cb9f2;
  font-family: 'Liberation Serif', serif;
  font-size: 18px;
  font-style: italic;
}
.var.k {
  font-style: normal;
  font-weight: 700;
  font-size: 14px;
}
.vartools .var {
  width: auto;
}
.vartools sup {
  color: #f0bb50;
  align-self: flex-start;
  font-size: 12px;
  line-height: 12px;
}
.vartools .off,
.vartools .off .var {
  color: #a3abb3;
}
.vartools sub {
  align-self: flex-end;
  font-size: 10px;
  line-height: 12px;
}
.tree {
  display: flex;
  flex: 1;
  min-height: 0;
  overflow: hidden;
  border: 1px solid #626a72;
  border-bottom: 0;
}
.tree ul {
  flex: 1;
  list-style: none;
}
.tree li {
  display: flex;
  gap: 5px;
  align-items: center;
  height: 20px;
  margin-left: 31px;
}
.tree li:not(.root)::before {
  align-self: stretch;
  width: 8px;
  border-left: 1px dotted #68717b;
  background: linear-gradient(#59636d, #59636d) left center / 8px 1px no-repeat;
  content: '';
}
.tree .root {
  margin-left: 7px;
}
.minus {
  width: 9px;
  height: 9px;
  border: 4px solid #eef1f4;
  border-width: 4px 2px;
  background: #303a44;
}
.tree .bar {
  width: 16px;
  padding-bottom: 7px;
}
.tree .thumb {
  flex: 1;
}

.status {
  display: grid;
  flex: none;
  grid-template-columns: 290px 1fr auto;
  align-items: center;
  height: 25px;
  padding-top: 1px;
}
.status output {
  padding-left: 11px;
}
.toggles,
.rightside {
  display: flex;
  align-items: center;
}
.toggles {
  gap: 4px;
}
.toggles button {
  width: 20px;
  height: 20px;
}
.toggles .on {
  border: 1px solid #72b5e6;
  background: #4a5f78;
}
.rightside {
  gap: 6px;
}
.ratio {
  gap: 2px;
  align-self: flex-start;
  margin: 0 4px 0 -3px;
  color: #9ba2aa;
}
.corner {
  align-self: flex-end;
  width: 14px;
  height: 14px;
  margin-left: 1px;
}
</style>
